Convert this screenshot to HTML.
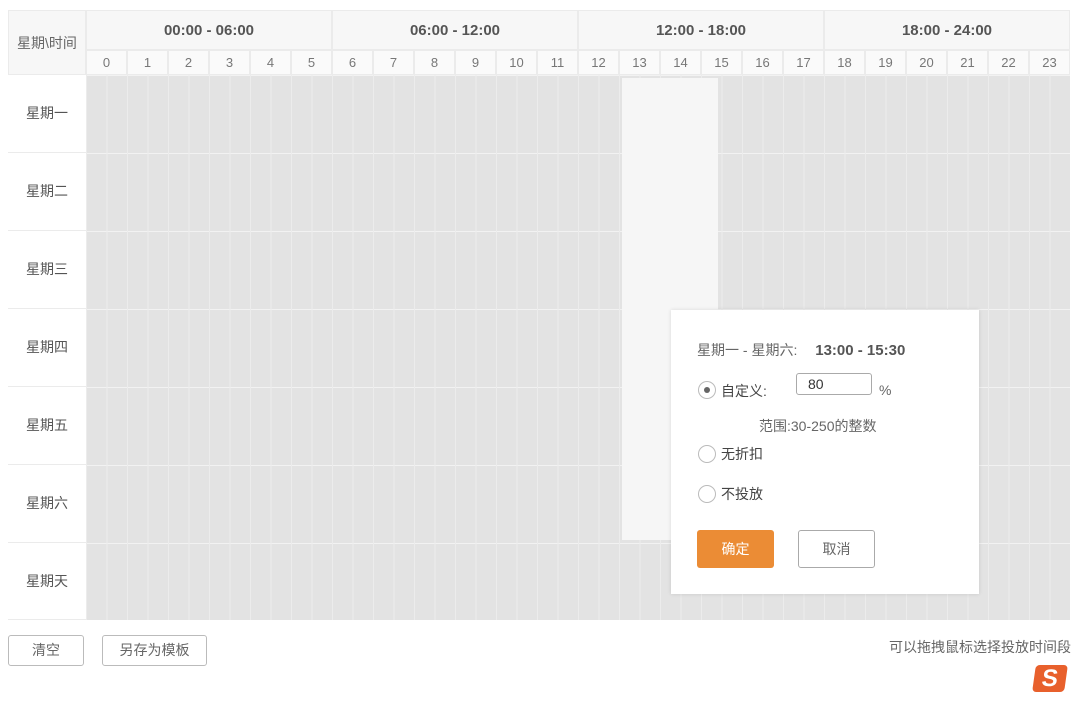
<!DOCTYPE html>
<html><head><meta charset="utf-8"><style>
body{margin:0;width:1080px;height:708px;background:#fff;position:relative;overflow:hidden;font-family:"Liberation Sans","Noto Sans CJK SC",sans-serif;color:#555}
.a{position:absolute}
.hd{background:#f7f7f7;border:1px solid #ebebeb;box-sizing:border-box;text-align:center}
.grp{font-weight:bold;font-size:15px;color:#555;line-height:40px}
.hr{font-size:13px;color:#777;line-height:24px;background:#fafafa}
.day{font-size:14px;color:#555;text-align:center;line-height:77px;background:#fff;border-bottom:1px solid #ebebeb;box-sizing:border-box;width:78px;left:8px}
.grid{left:86px;top:75px;width:984px;height:545px;background-color:#e3e3e3;
background-image:linear-gradient(to right,#ececec 1px,transparent 1px),linear-gradient(to bottom,#f2f2f2 1px,transparent 1px);
background-size:20.5px 100%,100% 78px;background-position:0 0,0 0}
.btn{border:1px solid #bbb;border-radius:3px;font-size:14px;color:#666;text-align:center;box-sizing:border-box}
.rad{width:18px;height:18px;border:1px solid #bbb;border-radius:50%;box-sizing:border-box}
</style></head><body>
<div class="a hd" style="left:8px;top:10px;width:78px;height:65px;line-height:65px;font-size:14px;color:#666">星期\时间</div>
<div class="a hd grp" style="left:86px;top:10px;width:246px;height:40px">00:00 - 06:00</div>
<div class="a hd grp" style="left:332px;top:10px;width:246px;height:40px">06:00 - 12:00</div>
<div class="a hd grp" style="left:578px;top:10px;width:246px;height:40px">12:00 - 18:00</div>
<div class="a hd grp" style="left:824px;top:10px;width:246px;height:40px">18:00 - 24:00</div>
<div class="a hd hr" style="left:86px;top:50px;width:41px;height:25px">0</div>
<div class="a hd hr" style="left:127px;top:50px;width:41px;height:25px">1</div>
<div class="a hd hr" style="left:168px;top:50px;width:41px;height:25px">2</div>
<div class="a hd hr" style="left:209px;top:50px;width:41px;height:25px">3</div>
<div class="a hd hr" style="left:250px;top:50px;width:41px;height:25px">4</div>
<div class="a hd hr" style="left:291px;top:50px;width:41px;height:25px">5</div>
<div class="a hd hr" style="left:332px;top:50px;width:41px;height:25px">6</div>
<div class="a hd hr" style="left:373px;top:50px;width:41px;height:25px">7</div>
<div class="a hd hr" style="left:414px;top:50px;width:41px;height:25px">8</div>
<div class="a hd hr" style="left:455px;top:50px;width:41px;height:25px">9</div>
<div class="a hd hr" style="left:496px;top:50px;width:41px;height:25px">10</div>
<div class="a hd hr" style="left:537px;top:50px;width:41px;height:25px">11</div>
<div class="a hd hr" style="left:578px;top:50px;width:41px;height:25px">12</div>
<div class="a hd hr" style="left:619px;top:50px;width:41px;height:25px">13</div>
<div class="a hd hr" style="left:660px;top:50px;width:41px;height:25px">14</div>
<div class="a hd hr" style="left:701px;top:50px;width:41px;height:25px">15</div>
<div class="a hd hr" style="left:742px;top:50px;width:41px;height:25px">16</div>
<div class="a hd hr" style="left:783px;top:50px;width:41px;height:25px">17</div>
<div class="a hd hr" style="left:824px;top:50px;width:41px;height:25px">18</div>
<div class="a hd hr" style="left:865px;top:50px;width:41px;height:25px">19</div>
<div class="a hd hr" style="left:906px;top:50px;width:41px;height:25px">20</div>
<div class="a hd hr" style="left:947px;top:50px;width:41px;height:25px">21</div>
<div class="a hd hr" style="left:988px;top:50px;width:41px;height:25px">22</div>
<div class="a hd hr" style="left:1029px;top:50px;width:41px;height:25px">23</div>
<div class="a" style="left:8px;top:75px;width:1px;height:545px;background:#ebebeb"></div>
<div class="a day" style="top:75px;height:78px">星期一</div>
<div class="a day" style="top:153px;height:78px">星期二</div>
<div class="a day" style="top:231px;height:78px">星期三</div>
<div class="a day" style="top:309px;height:78px">星期四</div>
<div class="a day" style="top:387px;height:78px">星期五</div>
<div class="a day" style="top:465px;height:78px">星期六</div>
<div class="a day" style="top:543px;height:77px">星期天</div>
<div class="a grid"></div>
<div class="a" style="left:622px;top:78px;width:96px;height:462px;background:#f6f6f6"></div>
<div class="a" style="left:671px;top:310px;width:308px;height:284px;background:#fff;box-shadow:0 0 4px rgba(0,0,0,.12)">
 <div class="a" style="left:26px;top:30px;font-size:14px;color:#666;white-space:nowrap">星期一 - 星期六: <b style="margin-left:14px;font-size:15px;color:#555">13:00 - 15:30</b></div>
 <div class="a rad" style="left:27px;top:71px"><div class="a" style="left:5px;top:5px;width:6px;height:6px;border-radius:50%;background:#666"></div></div>
 <div class="a" style="left:50px;top:71px;font-size:14px;color:#444">自定义:</div>
 <div class="a" style="left:125px;top:63px;width:76px;height:22px;border:1px solid #aaa;border-radius:3px;box-sizing:border-box;font-size:14px;color:#333;padding-left:11px;line-height:20px">80</div>
 <div class="a" style="left:208px;top:72px;font-size:14px;color:#666">%</div>
 <div class="a" style="left:88px;top:106px;font-size:14px;color:#666">范围:30-250的整数</div>
 <div class="a rad" style="left:27px;top:135px"></div>
 <div class="a" style="left:50px;top:134px;font-size:14px;color:#444">无折扣</div>
 <div class="a rad" style="left:27px;top:175px"></div>
 <div class="a" style="left:50px;top:174px;font-size:14px;color:#444">不投放</div>
 <div class="a" style="left:26px;top:220px;width:77px;height:38px;background:#eb8c35;border-radius:3px;color:#fff;font-size:14px;text-align:center;line-height:38px">确定</div>
 <div class="a btn" style="left:127px;top:220px;width:77px;height:38px;line-height:36px;border-color:#aaa">取消</div>
</div>
<div class="a btn" style="left:8px;top:635px;width:76px;height:31px;line-height:29px">清空</div>
<div class="a btn" style="left:102px;top:635px;width:105px;height:31px;line-height:29px">另存为模板</div>
<div class="a" style="right:9px;top:637px;font-size:14px;color:#666">可以拖拽鼠标选择投放时间段</div>
<div class="a" style="left:1034px;top:665px;width:32px;height:27px;background:#e8602c;border-radius:4px;transform:skewX(-8deg);color:#fff;font-weight:bold;font-size:24px;line-height:27px;text-align:center">S</div>
</body></html>
